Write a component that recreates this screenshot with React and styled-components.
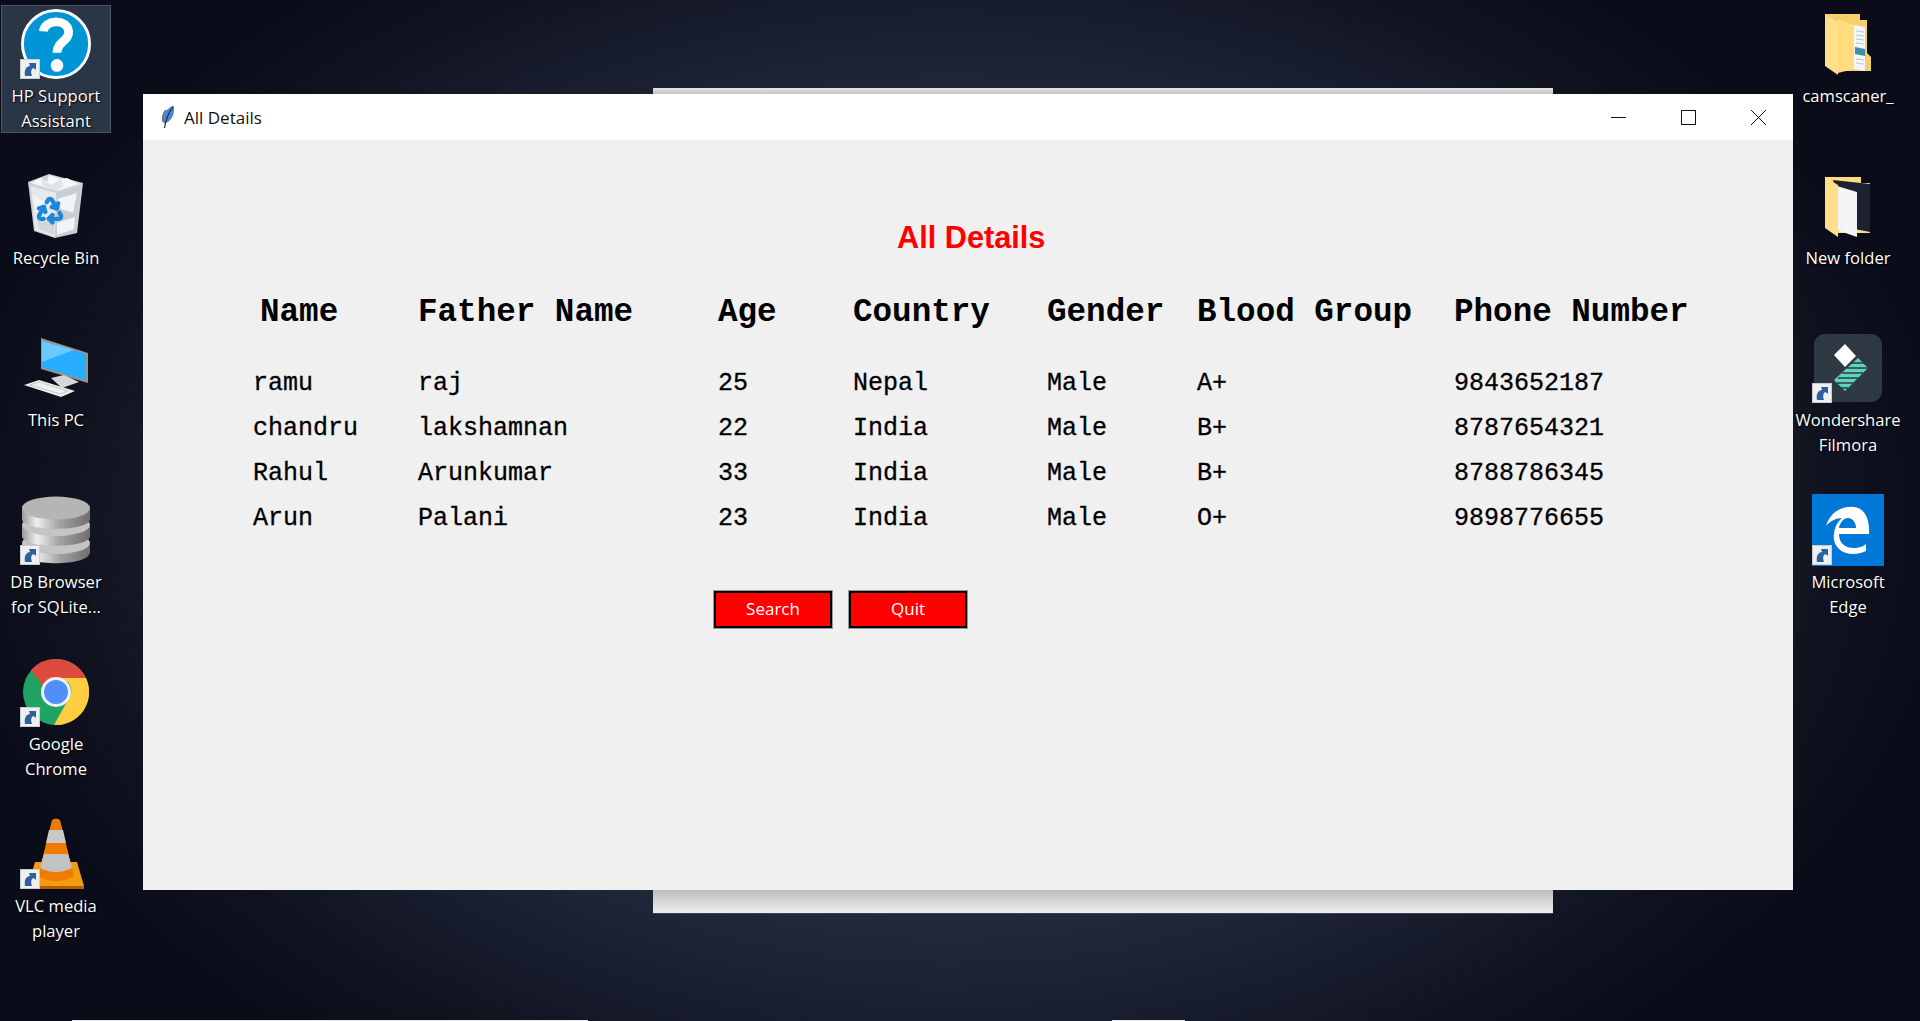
import React from 'react'
import styled, { createGlobalStyle } from 'styled-components'
import { Recycle } from 'lucide-react'

const Global = createGlobalStyle`
html, body { margin:0; padding:0; height:100%; overflow:hidden; }
#root { height:100%; }
`

const rows = [
  ['ramu', 'raj', '25', 'Nepal', 'Male', 'A+', '9843652187'],
  ['chandru', 'lakshamnan', '22', 'India', 'Male', 'B+', '8787654321'],
  ['Rahul', 'Arunkumar', '33', 'India', 'Male', 'B+', '8788786345'],
  ['Arun', 'Palani', '23', 'India', 'Male', 'O+', '9898776655'],
]
const headers = ['Father Name', 'Age', 'Country', 'Gender', 'Blood Group', 'Phone Number']

function Shortcut() {
  return (
    <ShortcutBadge>
      <svg width="16" height="16" viewBox="0 0 16 16">
        <path d="M3 15 C2 9 4 5.5 8 5 L7 2 L14 2 L14 9 L11.5 7 C9 8 8.5 11 10 15 Z" fill="#2f5f9e" />
      </svg>
    </ShortcutBadge>
  )
}

function HelpIcon() {
  return (
    <svg width="74" height="74" viewBox="0 0 74 74">
      <circle cx="37" cy="37" r="34.5" fill="#0096d6" stroke="#fff" strokeWidth="3" />
      <path d="M24 24 C25 12 48 10 50 24 C51 34 38 34 38 46" fill="none" stroke="#fff" strokeWidth="9" />
      <circle cx="38" cy="59" r="6.5" fill="#fff" />
    </svg>
  )
}

function BinIcon() {
  return (
    <svg width="58" height="66" viewBox="0 0 58 66">
      <path d="M1 9 L22 1 L56 10 L50 60 L28 65 L7 58 Z" fill="#cfd3d8" />
      <path d="M4 13 L29 20 L28 64 L8 57 Z" fill="#e6e9ec" />
      <path d="M29 20 L54 13 L49 59 L28 64 Z" fill="#c9ced3" />
      <path d="M4 10 L14 5 L20 9 L22 2 L34 6 L40 5 L52 11 L30 18 Z" fill="#f6f7f8" />
      <path d="M14 5 L24 12 L34 6 L36 13 L30 18 L16 13 Z" fill="#dfe3e7" />
      <path d="M6 22 L18 30 L10 44 Z M30 26 L50 20 L46 40 L34 36 Z M30 50 L48 44 L47 56 L30 62 Z" fill="#f2f4f5" />
      <path d="M10 46 L27 50 L27 62 L12 56 Z" fill="#d3d7db" />
      <Recycle x="8" y="22" width="30" height="30" color="#1c86d8" strokeWidth={3.4} />
    </svg>
  )
}

function PcIcon() {
  return (
    <svg width="64" height="60" viewBox="0 0 64 60">
      <path d="M17 0 L64 15 L64 45 L17 31 Z" fill="#8f9499" />
      <path d="M18 3 L62 16 L62 42 L18 29 Z" fill="#28aeff" />
      <path d="M18 3 L50 12 L18 24 Z" fill="#6cc8ff" />
      <path d="M27 40 L40 37 L55 44 L38 50 Z" fill="#d5d8da" />
      <path d="M0 47 L15 42 L51 53 L37 59 Z" fill="#eceeef" />
      <path d="M6 47 L15 44 L44 53 L36 56 Z" fill="none" stroke="#b4b8bb" strokeWidth="1" strokeDasharray="2 1" />
    </svg>
  )
}

function DbIcon() {
  return (
    <svg width="68" height="68" viewBox="0 0 68 68">
      <defs>
        <linearGradient id="dbBody" x1="0" x2="1" y1="0" y2="0">
          <stop offset="0" stopColor="#9c9c9c" />
          <stop offset="0.22" stopColor="#efefef" />
          <stop offset="0.55" stopColor="#a2a2a2" />
          <stop offset="1" stopColor="#6f6f6f" />
        </linearGradient>
      </defs>
      <path d="M0 48 L0 56 C0 71 68 71 68 56 L68 48 Z" fill="url(#dbBody)" />
      <ellipse cx="34" cy="47" rx="34" ry="11" fill="#c4c4c4" />
      <path d="M0 30 L0 40 C0 53 68 53 68 40 L68 30 Z" fill="url(#dbBody)" />
      <ellipse cx="34" cy="29" rx="34" ry="11" fill="#c4c4c4" />
      <path d="M0 13 L0 23 C0 36 68 36 68 23 L68 13 Z" fill="url(#dbBody)" />
      <ellipse cx="34" cy="12" rx="34" ry="11.5" fill="#b5b5b5" />
    </svg>
  )
}

function ChromeIcon() {
  return (
    <svg width="66" height="66" viewBox="0 0 66 66">
      <circle cx="33" cy="33" r="33" fill="#1fa463" />
      <path d="M33 0 A33 33 0 0 1 63 19 L33 19 A14 14 0 0 0 20 27 L8 11 A33 33 0 0 1 33 0 Z" fill="#db4c3f" />
      <path d="M63 19 A33 33 0 0 1 31 66 L45 41 A14 14 0 0 0 45 23 L33 19 Z" fill="#ffcd40" />
      <circle cx="33" cy="33" r="15" fill="#f1f1f1" />
      <circle cx="33" cy="33" r="12" fill="#4f8ff7" />
    </svg>
  )
}

function VlcIcon() {
  return (
    <svg width="58" height="72" viewBox="0 0 58 72">
      <path d="M8 44 L50 44 L57 68 L1 68 Z" fill="#f29a10" />
      <path d="M1 68 L57 68 L57 71 L1 71 Z" fill="#b35f00" />
      <path d="M25 2 Q29 -1 33 2 L47 58 Q29 68 11 58 Z" fill="#ef7c00" />
      <path d="M22 12 L36 12 L39 25 L19 25 Z" fill="#c9c9c9" />
      <path d="M17 36 L41 36 L45 50 Q29 58 13 50 Z" fill="#c2c2c2" />
    </svg>
  )
}

function FolderIcon({ dark }) {
  return dark ? (
    <svg width="48" height="62" viewBox="0 0 48 62">
      <path d="M1 2 L37 2 L37 8 L46 8 L46 58 L14 58 L1 50 Z" fill="#ffdc7d" />
      <path d="M9 5 L46 9 L46 57 L20 52 Z" fill="#1d2230" />
      <path d="M13 11 L33 17 L33 62 L13 55 Z" fill="#f4f4f4" />
      <path d="M1 2 L14 10 L14 62 L1 53 Z" fill="#ffe08a" />
    </svg>
  ) : (
    <svg width="48" height="62" viewBox="0 0 48 62">
      <path d="M1 1 L36 1 L36 7 L43 7 L43 40 L47 44 L47 58 L14 58 L1 50 Z" fill="#f5cf6b" />
      <path d="M30 12 L41 14 L41 58 L30 56 Z" fill="#f4f6f8" />
      <path d="M32 18 L40 19 M32 22 L40 23 M32 26 L40 27 M32 30 L40 31 M32 46 L40 47 M32 50 L40 51" stroke="#b9c3cc" strokeWidth="1" />
      <path d="M31 34 L41 36 L41 43 L31 41 Z" fill="#3d8fa8" />
      <path d="M1 1 L14 9 L14 62 L1 53 Z" fill="#ffe08a" />
      <path d="M14 6 L30 12 L30 56 L14 60 Z" fill="#ffdc7d" />
    </svg>
  )
}

function FilmoraIcon() {
  return (
    <svg width="68" height="68" viewBox="0 0 68 68">
      <rect width="68" height="68" rx="11" fill="#2f3944" />
      <path d="M31 10 L42 22 L31 33 L20 21 Z" fill="#fff" />
      <path d="M44 24 L54 34 L31 57 L20 46 Z" fill="#5fd4bc" />
      <path d="M38 29 L52 29 M33 34 L54 34 M28 39 L49 39 M24 44 L44 44 M23 49 L39 49 M27 54 L34 54" stroke="#2f3944" strokeWidth="1.6" />
    </svg>
  )
}

function EdgeIcon() {
  return (
    <svg width="72" height="72" viewBox="0 0 72 72">
      <rect width="72" height="72" fill="#0078d7" />
      <path d="M14 32 C19 16 32 12 42 13 C52 14 58 24 57 40 L27 40 C27 50 34 54 42 54 C47 54 52 52 54 50 L54 57 C50 59 46 60 40 60 C28 60 20 50 22 40 C23 30 28 26 30 24 C24 24 18 27 14 32 Z M27 34 L44 34 C44 28 40 24 36 24 C32 24 28 28 27 34 Z" fill="#fff" fillRule="evenodd" />
    </svg>
  )
}

function Feather() {
  return (
    <FeatherBox>
      <svg width="14" height="24" viewBox="0 0 14 24">
        <path d="M12.5 0.5 C14 6 12.5 13 7 17 L3 18.5 C0 13 2.5 5 12.5 0.5 Z" fill="#4c84cf" />
        <path d="M12 2 C8 7 5 13 3.5 23" stroke="#25282e" strokeWidth="1.2" fill="none" />
        <path d="M2 17 C1 12 2 8 5 5" stroke="#5c6168" strokeWidth="1.2" fill="none" />
      </svg>
    </FeatherBox>
  )
}

function DesktopIcon({ icon, label, link, selected }) {
  return (
    <Item $selected={selected}>
      <IconSlot>
        {icon}
        {link && <Shortcut />}
      </IconSlot>
      <ItemLabel>{label}</ItemLabel>
    </Item>
  )
}

function App() {
  return (
    <>
      <Global />
      <Desktop>
        <Column>
          <DesktopIcon selected link icon={<HelpIcon />} label={<>HP Support<br />Assistant</>} />
          <DesktopIcon icon={<BinIcon />} label="Recycle Bin" />
          <DesktopIcon icon={<PcIcon />} label="This PC" />
          <DesktopIcon link icon={<DbIcon />} label={<>DB Browser<br />for SQLite...</>} />
          <DesktopIcon link icon={<ChromeIcon />} label={<>Google<br />Chrome</>} />
          <DesktopIcon link icon={<VlcIcon />} label={<>VLC media<br />player</>} />
        </Column>
        <Column>
          <DesktopIcon icon={<FolderIcon />} label="camscaner_" />
          <DesktopIcon icon={<FolderIcon dark />} label="New folder" />
          <DesktopIcon link icon={<FilmoraIcon />} label={<>Wondershare<br />Filmora</>} />
          <DesktopIcon link icon={<EdgeIcon />} label={<>Microsoft<br />Edge</>} />
        </Column>

        <BackWindow />
        <Window>
          <TitleBar>
            <Feather />
            <TitleText>All Details</TitleText>
            <Controls>
              <Control>
                <svg width="15" height="15" viewBox="0 0 15 15"><path d="M0 7.5 H15" stroke="#111" strokeWidth="1" /></svg>
              </Control>
              <Control>
                <svg width="15" height="15" viewBox="0 0 15 15"><rect x="0.5" y="0.5" width="14" height="14" fill="none" stroke="#111" strokeWidth="1" /></svg>
              </Control>
              <Control>
                <svg width="15" height="15" viewBox="0 0 15 15"><path d="M0 0 L15 15 M15 0 L0 15" stroke="#111" strokeWidth="1" /></svg>
              </Control>
            </Controls>
          </TitleBar>
          <Body>
            <Heading>All Details</Heading>
            <HeaderRow>
              <HeaderCell $indent={7}>Name</HeaderCell>
              {headers.map((h) => <HeaderCell key={h}>{h}</HeaderCell>)}
            </HeaderRow>
            {rows.map((r) => (
              <Row key={r[0]}>
                {r.map((c, i) => <Cell key={i}>{c}</Cell>)}
              </Row>
            ))}
            <Buttons>
              <ActionButton>Search</ActionButton>
              <ActionButton>Quit</ActionButton>
            </Buttons>
          </Body>
        </Window>
        <TaskEdge $left={72} $width={516} />
        <TaskEdge $left={1112} $width={73} />
      </Desktop>
    </>
  )
}

export default App

const Desktop = styled.div`
position:relative;
width:1920px;
height:1021px;
overflow:hidden;
display:flex;
justify-content:space-between;
padding:5px 17px 0 1px;
box-sizing:border-box;
background:
  radial-gradient(ellipse 1000px 680px at 950px 520px, #2a3346 0%, #232a3c 58%, #1a2032 72%, #10131f 88%, #0a0c19 100%),
  #0a0c19;
font-family:"Open Sans", "Noto Sans", sans-serif;
`
const Column = styled.div`
display:flex;
flex-direction:column;
gap:34px;
width:110px;
`
const Item = styled.div`
box-sizing:border-box;
height:128px;
display:flex;
flex-direction:column;
align-items:center;
padding-top:1px;
border:1px solid ${(p) => (p.$selected ? '#4a5666' : 'transparent')};
background:${(p) => (p.$selected ? '#2a3646' : 'transparent')};
`
const IconSlot = styled.div`
position:relative;
width:72px;
height:74px;
display:flex;
align-items:center;
justify-content:center;
flex:none;
`
const ShortcutBadge = styled.div`
position:absolute;
left:0;
bottom:2px;
width:20px;
height:20px;
box-sizing:border-box;
border:1px solid #c9cdd1;
background:#eef0f2;
display:flex;
align-items:center;
justify-content:center;
`
const ItemLabel = styled.div`
margin-top:2px;
color:#fff;
font-size:16.6px;
line-height:25px;
text-align:center;
white-space:nowrap;
text-shadow:1px 1px 2px #000, 0 0 1px #000;
`
const BackWindow = styled.div`
position:absolute;
left:653px;
top:88px;
width:900px;
height:826px;
box-sizing:border-box;
background:linear-gradient(#e4e4e4 0, #c4c4c4 6px, #f0f0f0 6px, #f0f0f0 802px, #bdbdbd 802px, #f2f2f2 826px);
border-bottom:1px solid #3a3f4c;
`
const Window = styled.div`
position:absolute;
left:143px;
top:94px;
width:1650px;
height:796px;
background:#f0f0f0;
display:flex;
flex-direction:column;
`
const TitleBar = styled.div`
height:46px;
flex:none;
background:#fff;
display:flex;
align-items:center;
padding-left:18px;
`
const FeatherBox = styled.div`
width:14px;
height:24px;
margin-right:9px;
`
const TitleText = styled.div`
font-size:17px;
color:#111;
`
const Controls = styled.div`
margin-left:auto;
display:flex;
`
const Control = styled.div`
width:70px;
height:46px;
display:flex;
align-items:center;
justify-content:center;
`
const Body = styled.div`
flex:1;
display:flex;
flex-direction:column;
padding:78px 0 0 110px;
`
const Heading = styled.div`
margin-left:644px;
font-family:"Liberation Sans", Arial, sans-serif;
font-weight:700;
font-size:30.7px;
line-height:40px;
color:#ff0000;
margin-bottom:32px;
`
const Row = styled.div`
display:grid;
grid-template-columns:165px 300px 135px 194px 150px 257px 1fr;
height:45px;
align-items:center;
font-family:"Liberation Mono", "Courier New", monospace;
color:#000;
`
const HeaderRow = styled(Row)`
margin-bottom:26px;
`
const HeaderCell = styled.div`
font-size:32.6px;
font-weight:700;
white-space:pre;
padding-left:${(p) => p.$indent || 0}px;
`
const Cell = styled.div`
font-size:25px;
white-space:pre;
-webkit-text-stroke:0.3px #000;
`
const Buttons = styled.div`
display:flex;
gap:15px;
margin:49px 0 0 460px;
`
const ActionButton = styled.button`
box-sizing:border-box;
width:120px;
height:39px;
padding:0 0 2px;
border:3px solid #000;
outline:1px solid #9a9a9a;
outline-offset:-1px;
background:#ff0000;
color:#fff;
font-family:"Open Sans", "Noto Sans", sans-serif;
font-size:17px;
`
const TaskEdge = styled.div`
position:absolute;
bottom:0;
left:${(p) => p.$left}px;
width:${(p) => p.$width}px;
height:1px;
background:#e4e6ea;
`
